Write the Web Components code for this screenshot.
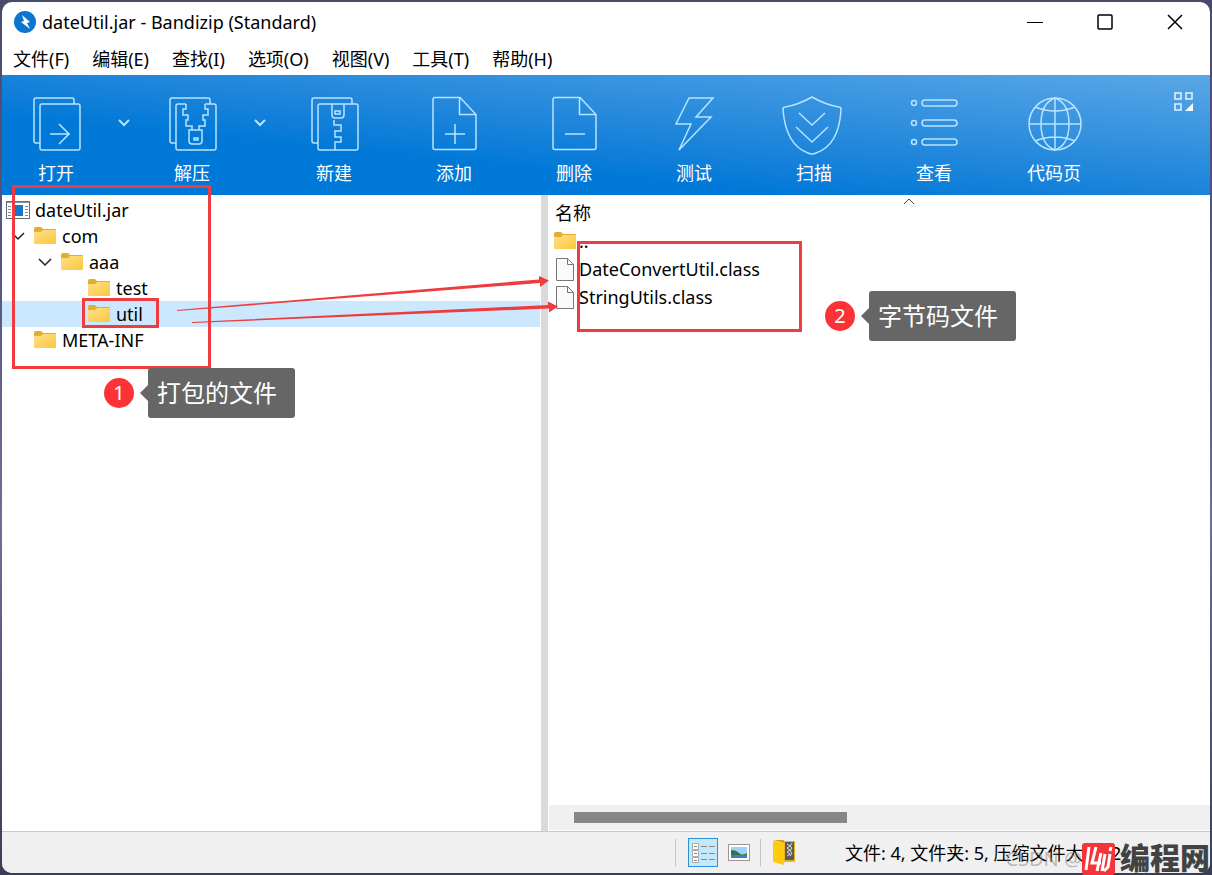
<!DOCTYPE html>
<html lang="zh-CN">
<head>
<meta charset="utf-8">
<title>dateUtil.jar - Bandizip (Standard)</title>
<style>
  html, body { margin: 0; min-height: 100vh; }
  body {
    background: linear-gradient(to bottom, #4a4a6b, #55577f 30%, #6d6f96 60%, #3b3d58);
    font-family: "Noto Sans", "Noto Sans CJK SC", sans-serif;
    font-size: 18px; line-height: 26px; color: #000;
  }
</style>
</head>
<body>
<bz-window>
  <bz-titlebar slot="title">dateUtil.jar - Bandizip (Standard)</bz-titlebar>
  <bz-menubar slot="menu" items="文件(F),编辑(E),查找(I),选项(O),视图(V),工具(T),帮助(H)"></bz-menubar>
  <bz-toolbar slot="tools">
    <bz-tool icon="open" more>打开</bz-tool>
    <bz-tool icon="extract" more>解压</bz-tool>
    <bz-tool icon="create">新建</bz-tool>
    <bz-tool icon="add">添加</bz-tool>
    <bz-tool icon="remove">删除</bz-tool>
    <bz-tool icon="test">测试</bz-tool>
    <bz-tool icon="scan">扫描</bz-tool>
    <bz-tool icon="view">查看</bz-tool>
    <bz-tool icon="globe">代码页</bz-tool>
  </bz-toolbar>
  <bz-tree slot="tree">
    <bz-row kind="archive">dateUtil.jar</bz-row>
    <bz-row open style="--depth:0">com</bz-row>
    <bz-row open style="--depth:1">aaa</bz-row>
    <bz-row style="--depth:2">test</bz-row>
    <bz-row selected style="--depth:2">util</bz-row>
    <bz-row style="--depth:0">META-INF</bz-row>
  </bz-tree>
  <bz-files slot="files">
    <bz-file kind="folder">..</bz-file>
    <bz-file kind="doc">DateConvertUtil.class</bz-file>
    <bz-file kind="doc">StringUtils.class</bz-file>
  </bz-files>
  <bz-status slot="status">文件: 4, 文件夹: 5, 压缩文件大小: 2</bz-status>
</bz-window>
<bz-notes></bz-notes>
<bz-watermark></bz-watermark>

<script>
const FOLDER = `<svg width="22" height="18" viewBox="0 0 22 18" aria-hidden="true"><defs><linearGradient id="g" x1="0" y1="0" x2="1" y2="1"><stop offset="0" stop-color="#ffe08a"/><stop offset="1" stop-color="#fbc83c"/></linearGradient></defs><path d="M0 2q0-2 2-2h5l2 2h12q1 0 1 1v6H0z" fill="#e3ad2d"/><path d="M0 5h7l2-2h13v13q0 1-1 1H1q-1 0-1-1z" fill="url(#g)"/></svg>`;
const DOC = `<svg width="18" height="23" viewBox="0 0 18 23" aria-hidden="true"><path d="M.5.5h11l6 6v16H.5z" fill="#fafafa" stroke="#777"/><path d="M11.5.5v6h6" fill="none" stroke="#777"/></svg>`;
const ARCHIVE = `<svg width="24" height="18" viewBox="0 0 24 18" aria-hidden="true"><rect x=".5" y=".5" width="23" height="17" fill="#fff" stroke="#62707b"/><path d="M1 1.500h22" stroke="#8c979f"/><rect x="7" y="4" width="10" height="11" fill="#1877c9"/><path d="M2 5.500h3M2 8.500h3M2 11.500h3M2 14.500h3M19 5.500h3M19 8.500h3M19 11.500h3M19 14.500h3" stroke="#7d8a94"/></svg>`;
const BACK = `<path d="M14 49h-4q-2 0-2-2V6q0-2 2-2h36q2 0 2 2v4"/>`;
const SHEET = `<path d="M36 3.500H11q-2 0-2 2v48q0 2 2 2h39q2 0 2-2V20.500z"/><path d="M35.500 3.500v17H52"/>`;
const ICONS = {
  open: BACK + `<rect x="14" y="10" width="40" height="46" rx="2"/><path d="M24 40h20M33 30l10 10-10 10"/>`,
  extract: BACK + `<path d="M24 10h-8q-2 0-2 2v42q0 2 2 2h36q2 0 2-2V12q0-2-2-2h-9M24 10v5h-3v6h5v5h-2v6h6v4M43 10v5h3v6h-5v5h2v6h-6v4"/><path d="M27 36h13v11q0 3-3 3h-7q-3 0-3-3z"/><rect x="32" y="44" width="4" height="2"/>`,
  create: BACK + `<rect x="14" y="10" width="40" height="46" rx="2"/><path d="M28 10v11q0 3 3 3h6q3 0 3-3V10M30 26v5h7v6h-6v6h6v5h-6v8"/><rect x="31" y="17" width="5" height="3"/>`,
  add: SHEET + `<path d="M21 40h20M31 30v20"/>`,
  remove: SHEET + `<path d="M21 40h20"/>`,
  test: `<path d="M25 4h24L32 23h15L15 56l12-26H12z"/>`,
  scan: `<path d="M28 3q14 8 27 10 2 0 2 3-2 35-25 43-4 2-8 0Q2 51-1 16q0-3 2-3Q14 11 28 3z"/><path d="M15 19l13 12 13-12M12 33l16 15 16-15"/>`,
  view: [9, 29, 48].map(y => `<circle cx="10" cy="${y}" r="2.500"/><rect x="18" y="${y - 3}" width="35" height="6" rx="3"/>`).join(''),
  globe: `<circle cx="31" cy="30" r="26"/><path d="M31 4v52M5 30h52M11 13q20 8 40 0M11 47q20-8 40 0"/><path d="M31 4q-14 5-14 26t14 26q14-5 14-26T31 4z"/>`
};
function define(name, render) {
  customElements.define(name, class extends HTMLElement {
    constructor() { super(); this.attachShadow({ mode: 'open' }); }
    connectedCallback() { this.shadowRoot.innerHTML = render(this); }
  });
}

define('bz-window', () => `<style>
  :host { display: grid; box-sizing: border-box; min-height: 100vh; padding: 2px; }
  main { display: grid; grid-template-rows: auto auto auto 1fr auto; background: #fff; border-radius: 10px; overflow: hidden; }
  .body { display: grid; grid-template-columns: minmax(0, 539fr) 7px minmax(0, 662fr); }
  .split { background: #dadada; }
</style><main><slot name="title"></slot><slot name="menu"></slot><slot name="tools"></slot>
<div class="body"><slot name="tree"></slot><div class="split"></div><slot name="files"></slot></div>
<slot name="status"></slot></main>`);

define('bz-titlebar', () => `<style>
  :host { display: flex; align-items: center; height: 40px; padding-left: 12px; }
  h1 { flex: 1; margin: 0 0 0 6px; font: inherit; }
  button { width: 70px; height: 40px; border: 0; padding: 0; background: none; display: grid; place-items: center; }
  path, rect { fill: none; stroke: #000; stroke-width: 1.5; }
</style>
<svg width="22" height="22" viewBox="0 0 22 22" aria-hidden="true"><circle cx="11" cy="11" r="11" style="fill:#0d75cf"/><path d="M8 4l8 7-3 1 3 6-9-7 3-1z" style="fill:#fff;stroke:none"/></svg>
<h1><slot></slot></h1>
<button aria-label="最小化"><svg width="16" height="16"><path d="M0 8.500h16" style="stroke-width:1"/></svg></button>
<button aria-label="最大化"><svg width="16" height="16"><rect x="1" y="1" width="14" height="14" rx="1"/></svg></button>
<button aria-label="关闭"><svg width="16" height="16"><path d="M1 1l14 14M15 1L1 15"/></svg></button>`);

define('bz-menubar', el => `<style>
  :host { display: flex; gap: 23px; height: 33px; align-items: center; padding-left: 11px; }
  button { border: 0; padding: 0; background: none; font: inherit; color: inherit; }
</style>${el.getAttribute('items').split(',').map(t => `<button>${t}</button>`).join('')}`);

define('bz-toolbar', () => `<style>
  :host { display: flex; height: 120px; color: #fff; background: linear-gradient(to bottom left, #5aa7e6, #1a83da 50%, #0078d7 68%); }
  .layout { margin: 17px 16px 0 auto; width: 20px; height: 20px; padding: 0; border: 0; background: none; }
</style><slot></slot>
<button class="layout" aria-label="布局"><svg width="20" height="20" viewBox="0 0 20 20" fill="none" stroke="#e4f5ff" stroke-width="1.5"><path d="M1 1h6v6H1zM12 1h6v6h-6zM1 12h6v6H1z"/><path d="M19 11v8h-8z" fill="#fff" stroke="none"/></svg></button>`);

define('bz-tool', el => {
  const more = el.hasAttribute('more');
  return `<style>
  :host { display: flex; flex: 0 1 ${more ? 136 : 120}px; }
  button { border: 0; padding: 0; background: none; color: inherit; font: inherit; }
  .main { flex: 1; display: flex; flex-direction: column; align-items: center; gap: 6px; padding-top: 19px; }
  .more { width: 28px; padding-top: 40px; display: flex; justify-content: center; }
  svg { overflow: visible; fill: none; stroke: #b9e4ff; stroke-width: 1.5; }
</style><button class="main"><svg width="60" height="60" viewBox="0 0 60 60" aria-hidden="true">${ICONS[el.getAttribute('icon')]}</svg><span><slot></slot></span></button>
${more ? `<button class="more" aria-label="更多"><svg width="12" height="12" viewBox="0 0 12 12" style="stroke-width:2"><path d="M1 5l5 5 5-5"/></svg></button>` : ''}`;
});

define('bz-tree', () => `<style>:host { display: block; padding-top: 2px; }</style><slot></slot>`);

define('bz-row', el => {
  const archive = el.getAttribute('kind') === 'archive';
  return `<style>
  :host { display: flex; align-items: center; height: 26px; padding-left: ${archive ? '4px' : 'calc(var(--depth) * 27px + 8px)'}; }
  :host([selected]) { background: #cce8ff; margin-right: 1px; }
  .twist { width: 24px; height: 12px; display: flex; padding: 0; border: 0; background: none; align-items: center; justify-content: flex-start; }
  .twist path { fill: none; stroke: #222; stroke-width: 1.5; }
  .icon { display: flex; width: ${archive ? 29 : 28}px; }
</style>${archive ? '' : el.hasAttribute('open')
    ? `<button class="twist" aria-label="折叠"><svg width="16" height="10" viewBox="0 0 16 10"><path d="M2 2l6 6 6-6"/></svg></button>`
    : `<span class="twist"></span>`}<span class="icon">${archive ? ARCHIVE : FOLDER}</span><slot></slot>`;
});

define('bz-files', () => `<style>
  :host { display: flex; flex-direction: column; min-width: 0; }
  header { display: grid; grid-template-columns: 348px 1fr; height: 32px; padding: 0 7px; }
  header span { padding-top: 5px; }
  header svg { margin-top: 3px; }
  .list { flex: 1; }
  .scroll { display: flex; height: 25px; margin: 0 0 1px 1px; align-items: center; background: #f0f0f0; padding-left: 25px; }
  .thumb { width: 43%; height: 11px; background: #868686; }
</style><header><span>名称</span><svg width="12" height="8" viewBox="0 0 12 8" aria-hidden="true"><path d="M1 6l5-5 5 5" fill="none" stroke="#444"/></svg></header>
<div class="list"><slot></slot></div><div class="scroll"><div class="thumb"></div></div>`);

define('bz-file', el => `<style>
  :host { display: flex; align-items: center; height: 28px; padding-left: 6px; }
  .icon { display: flex; width: 25px; }
  .doc { padding-left: 2px; width: 23px; }
</style><span class="icon ${el.getAttribute('kind')}">${el.getAttribute('kind') === 'doc' ? DOC : FOLDER}</span><slot></slot>`);

define('bz-status', () => `<style>
  :host { display: flex; align-items: center; justify-content: flex-end; height: 41px; border-top: 1px solid #c9c9c9; background: #f0f0f0; }
  .sep { width: 1px; height: 27px; background: #c4c4c4; }
  button { width: 30px; height: 29px; padding: 0; border: 0; background: none; display: grid; place-items: center; box-sizing: border-box; }
  .on { border: 1px solid #2b91d4; background: #c5e9fb; margin: 0 6px 0 12px; }
  .thumbs { margin-right: 6px; }
  .pack { margin: 0 46px 0 8px; }
  .text { width: 365px; white-space: nowrap; }
</style><span class="sep"></span>
<button class="on" aria-label="详细信息"><svg width="26" height="22" viewBox="0 0 26 22" fill="none"><path d="M2.500 1.500h6v6h-6zM2.500 8.500h6v6h-6zM2.500 15.500h6v5h-6z" fill="#fff" stroke="#aaa"/><path d="M4 4.500h3M4 11.500h3M4 18.500h3" stroke="#888"/><path d="M11 4.500h6M19 4.500h6M11 11.500h6M19 11.500h6M11 17.500h6M19 17.500h6" stroke="#888"/></svg></button>
<button class="thumbs" aria-label="缩略图"><svg width="22" height="17" viewBox="0 0 22 17"><rect x=".5" y=".5" width="21" height="16" fill="#fff" stroke="#999"/><rect x="3" y="3" width="16" height="11" fill="#9fd0f5"/><path d="M3 6q5 0 8 3t8 0v2H3z" fill="#34724e"/><path d="M3 11h16v3H3z" fill="#3f7fb8"/></svg></button>
<span class="sep"></span>
<button class="pack" aria-label="压缩包"><svg width="24" height="26" viewBox="0 0 24 26"><path d="M11 1h12v21H11z" fill="#eab51d"/><path d="M13 2h9v18h-9z" fill="#5c5c5c"/><path d="M15 4l3 2-3 2 3 2-3 2 3 2-3 2M20 3l-2 3 2 2-2 3 2 2-2 3" fill="none" stroke="#ddd"/><path d="M1 1l11 2v22L1 22z" fill="#ffc90e"/><path d="M1 0h11v3z" fill="#d89f12"/></svg></button>
<span class="text"><slot></slot></span>`);

define('bz-note', el => `<style>
  :host { display: flex; align-items: center; }
  b { width: 30px; height: 30px; border-radius: 50%; background: #fc3237; color: #fff; font-size: 20px; line-height: 30px; font-weight: 400; text-align: center; }
  i { margin-left: 6px; border: 8px solid transparent; border-left-width: 0; border-right-color: #666; }
  span { width: 147px; height: 50px; box-sizing: border-box; padding-left: 9px; border-radius: 3px; background: #666; color: #fff; font-size: 24px; line-height: 50px; }
</style><b>${el.getAttribute('n')}</b><i></i><span><slot></slot></span>`);

define('bz-notes', () => `<style>
  :host { position: absolute; left: 0; top: 0; pointer-events: none; }
  .box, bz-note, svg { position: absolute; box-sizing: border-box; }
  .box { border: 3px solid #f03c40; }
  .tree { left: 12px; top: 185px; width: 199px; height: 184px; }
  .util { left: 82px; top: 298px; width: 77px; height: 30px; }
  .files { left: 577px; top: 241px; width: 225px; height: 91px; }
  .one { left: 104px; top: 368px; }
  .two { left: 825px; top: 291px; }
  svg { left: 0; top: 0; fill: #ef3a3e; }
</style>
<div class="box tree"></div><div class="box util"></div><div class="box files"></div>
<svg width="600" height="360" viewBox="0 0 600 360" aria-hidden="true"><path d="M177 310L539 279.500V276l10 4.500-9 6.500v-4L177 311z"/><path d="M192 322L548 305v-3.500l10 5-9 6v-4L192 323z"/></svg>
<bz-note class="one" n="1">打包的文件</bz-note><bz-note class="two" n="2">字节码文件</bz-note>`);

define('bz-watermark', () => `<style>
  :host { position: absolute; right: 0; bottom: 0; display: flex; align-items: center; height: 32px; pointer-events: none; }
  small { font-size: 20px; line-height: 32px; color: #8888; }
  svg { display: block; }
  strong { width: 97px; box-sizing: border-box; padding-left: 5px; height: 32px; line-height: 30px; font-size: 30px; font-weight: 900; color: #424242; white-space: nowrap; }
</style><small>CSDN @</small><svg width="33" height="32" viewBox="0 0 33 32" aria-hidden="true"><rect width="33" height="32" rx="3" fill="#f7333a"/><path d="M7 4L4 27M14 4l-4 16h9M19 10l-4 18M23 11l-3 17M28 11l-2 13-4 4M29 4l-1 4" fill="none" stroke="#fff" stroke-width="3"/></svg><strong>编程网</strong>`);
</script>
</body>
</html>
